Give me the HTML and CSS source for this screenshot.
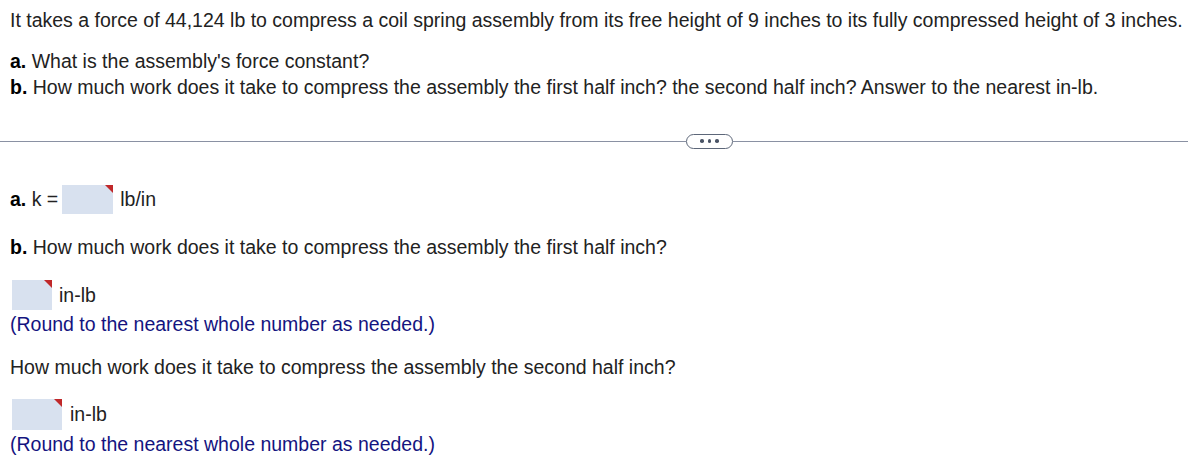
FILE: index.html
```html
<!DOCTYPE html>
<html>
<head>
<meta charset="utf-8">
<link rel="stylesheet" href="styles.css">
</head>
<body>
<div class="page">
  <p class="intro">It takes a force of 44,124 lb to compress a coil spring assembly from its free height of 9 inches to its fully compressed height of 3 inches.</p>
  <div class="questions">
    <div><b>a.</b> What is the assembly's force constant?</div>
    <div><b>b.</b> How much work does it take to compress the assembly the first half inch? the second half inch? Answer to the nearest in-lb.</div>
  </div>
  <div class="divider"><span class="line"></span><span class="more"><i></i><i></i><i></i></span><span class="line"></span></div>
  <div class="answer-row row-a"><span class="label"><b>a.</b> k =</span><span class="input w51"></span><span class="unit">lb/in</span></div>
  <div class="text b-text"><b>b.</b> How much work does it take to compress the assembly the first half inch?</div>
  <div class="answer-row row-b"><span class="input w40"></span><span class="unit">in-lb</span></div>
  <div class="text hint">(Round to the nearest whole number as needed.)</div>
  <div class="text second">How much work does it take to compress the assembly the second half inch?</div>
  <div class="answer-row row-c"><span class="input w50"></span><span class="unit u8">in-lb</span></div>
  <div class="text hint">(Round to the nearest whole number as needed.)</div>
</div>
</body>
</html>
```

FILE: styles.css
```css
html, body { margin: 0; padding: 0; background: #fff; }
body {
  font-family: "Liberation Sans", Arial, sans-serif;
  font-size: 19.5px;
  color: #222;
}
.page { padding: 7px 0 0 0; }
.intro { margin: 0; padding-left: 10px; line-height: 26px; }
.questions { margin-top: 15px; padding-left: 10px; line-height: 26px; }
b { font-weight: bold; color: #000; }
.divider {
  margin-top: 34px;
  height: 14px;
  display: flex;
  align-items: center;
}
.divider .line { height: 1px; background: #8a91a3; }
.divider .line:first-child { width: 686px; }
.divider .line:last-child { flex: 1; }
.more {
  box-sizing: border-box;
  width: 47px;
  height: 15px;
  border: 1.5px solid #5d6779;
  border-radius: 8px;
  display: flex;
  align-items: center;
  justify-content: center;
  gap: 4px;
}
.more i {
  width: 3.5px; height: 3.5px; border-radius: 50%; background: #4a5466; display: block;
}
.answer-row {
  display: flex;
  align-items: center;
  padding-left: 12px;
  height: 29px;
}
.row-a { margin-top: 37px; padding-left: 10px; }
.row-a .label { margin-right: 4px; }
.input {
  position: relative;
  height: 29px;
  background: #d8e1ef;
  display: block;
}
.input::after {
  content: "";
  position: absolute;
  top: 0; right: 0;
  width: 0; height: 0;
  border-style: solid;
  border-width: 0 8px 8px 0;
  border-color: transparent #c0282a transparent transparent;
}
.w51 { width: 51px; }
.w40 { width: 40px; height: 30px; }
.w50 { width: 50px; height: 31px; }
.unit { margin-left: 7px; }
.u8 { margin-left: 8px; }
.text { padding-left: 10px; line-height: 26px; }
.b-text { margin-top: 20px; }
.row-b { margin-top: 20px; height: 30px; }
.hint { color: #14147f; margin-top: 1px; }
.second { margin-top: 17px; }
.row-c { margin-top: 19px; height: 31px; }
```
